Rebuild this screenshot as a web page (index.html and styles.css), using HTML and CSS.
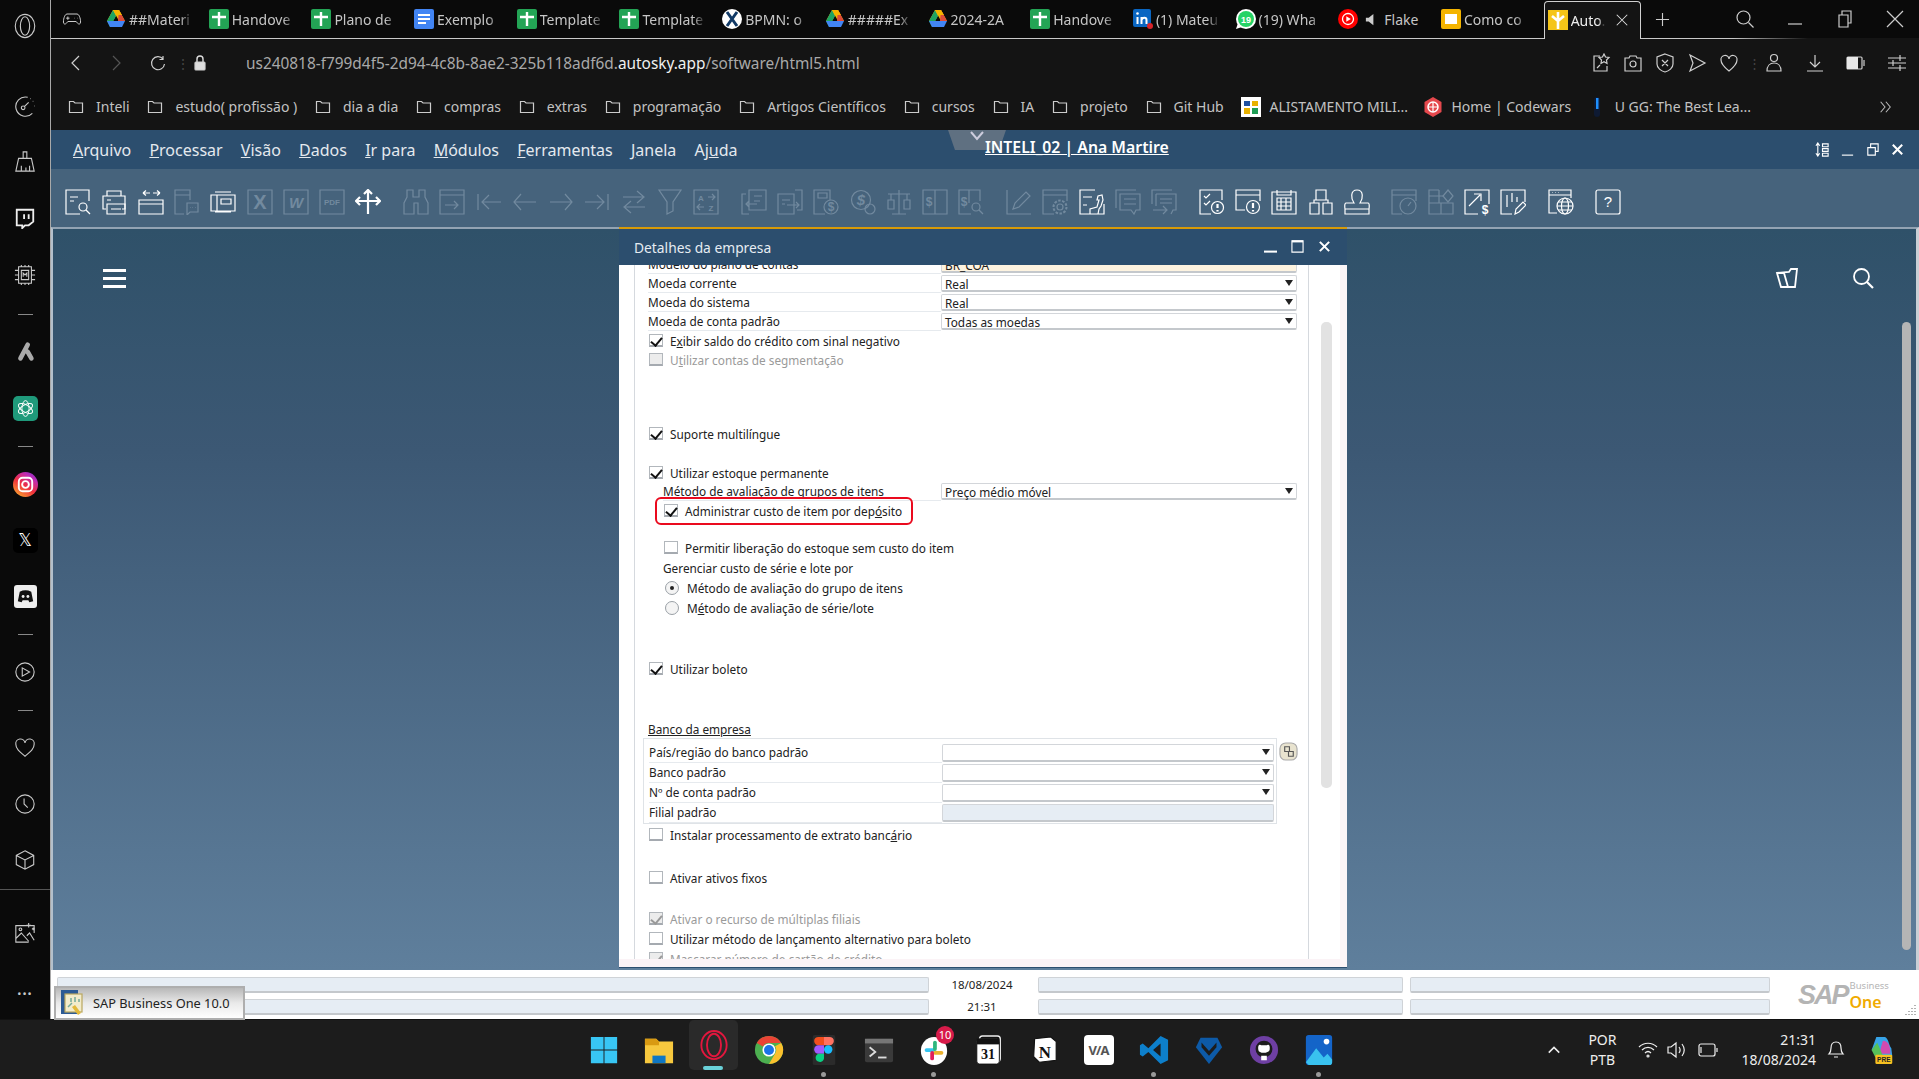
FILE: index.html
```html
<!DOCTYPE html>
<html lang="pt-BR">
<head>
  <meta charset="UTF-8">
  <title>SAP Business One - Detalhes da empresa</title>
  <link rel="stylesheet" href="styles.css">
</head>
<body>
  <!-- shared icons -->
  <svg class="defs" xmlns="http://www.w3.org/2000/svg">
    <symbol id="folder" viewBox="0 0 16 16"><path d="M1.5 13.5v-11h4l1.5 1.5h7.5v9.500z"/></symbol>
    <symbol id="sheets" viewBox="0 0 20 20"><rect x="0" y="0" width="20" height="20" rx="2" fill="#23a455" stroke="none"/><path d="M10 3v14M3 8h14" stroke="#fff" stroke-width="2.4"/></symbol>
    <symbol id="drive" viewBox="0 0 20 20"><path d="M7 1h6l-6 11H1z" fill="#f5b400" stroke="none"/><path d="M13 1l6 11h-6L7 1z" fill="#f5b400" stroke="none"/><path d="M7 1l3 6-6 11-3-6z" fill="#1da462" stroke="none"/><path d="M13 1l6 11h-7z" fill="#dd4b39" stroke="none"/><path d="M1 12h0l3 6h12l3-6H7z" fill="#4285f4" stroke="none"/><path d="M7 1h6l3 5H10z" fill="#f5b400" stroke="none"/></symbol>
    <symbol id="docs" viewBox="0 0 20 20"><rect width="20" height="20" rx="2" fill="#4285f4" stroke="none"/><path d="M4 6h12M4 10h12M4 14h8" stroke="#fff" stroke-width="2"/></symbol>
    <symbol id="bpmn" viewBox="0 0 20 20"><circle cx="10" cy="10" r="10" fill="#fff" stroke="none"/><path d="M5 3l10 14M15 3L5 17" stroke="#123a66" stroke-width="3"/></symbol>
    <symbol id="linkedin" viewBox="0 0 20 20"><rect width="18" height="18" rx="2" fill="#0a66c2" stroke="none"/><path d="M4.500 8v7M8.500 15V8M8.500 11c1-3 5-3 5 0v4" stroke="#fff" stroke-width="2"/><circle cx="4.500" cy="4.500" r="1.300" fill="#fff" stroke="none"/><circle cx="17" cy="17" r="3" fill="#d8232a" stroke="none"/></symbol>
    <symbol id="whatsapp" viewBox="0 0 20 20"><circle cx="10" cy="10" r="10" fill="#fff" stroke="none"/><circle cx="10" cy="10" r="8" fill="#25d366" stroke="none"/><path d="M0 20l2-6 4 4z" fill="#fff" stroke="none"/></symbol>
    <symbol id="youtube" viewBox="0 0 20 20"><circle cx="10" cy="10" r="10" fill="#f00" stroke="none"/><circle cx="10" cy="10" r="5.500" stroke="#fff" stroke-width="1.300"/><path d="M8.300 7.300l4.500 2.700-4.500 2.700z" fill="#fff" stroke="none"/></symbol>
    <symbol id="slides" viewBox="0 0 20 20"><rect width="20" height="20" rx="2" fill="#f4b400" stroke="none"/><rect x="4" y="5" width="12" height="10" fill="#fff" stroke="none"/></symbol>
    <symbol id="autosky" viewBox="0 0 20 20"><rect width="20" height="20" fill="#f5c518" stroke="none"/><path d="M10 19v-8M10 11L4 6M10 11l6-5M10 9V2" stroke="#fff" stroke-width="2.600"/></symbol>

    <!-- toolbar -->
    <symbol id="t-preview" viewBox="0 0 26 26"><path d="M24 12V1H1v24h14M5 8h8M5 12h4"/><circle cx="18" cy="18" r="4"/><path d="M21 21l4 4"/></symbol>
    <symbol id="t-print" viewBox="0 0 26 26"><path d="M6 7V2h14v5M5 20H2V7h22v13h-3M6 11h4"/><path d="M6 15h18v10H6zM10 20h10"/></symbol>
    <symbol id="t-width" viewBox="0 0 26 26"><path d="M1 11h24v14H1zM1 15h24M5 4h7M5 4l3-2.500M5 4l3 2.500M15 4h7M22 4l-3-2.500M22 4l-3 2.500"/></symbol>
    <symbol id="t-docchat" viewBox="0 0 26 26"><path d="M16 11V1H1v24h9M1 6h15"/><path d="M13 14h11v9h-8l-3 3z"/><path d="M16 18.500h.5M18.500 18.500h.5M21 18.500h.5"/></symbol>
    <symbol id="t-layout" viewBox="0 0 26 26"><path d="M5 3h16M5 23h16M1 6h24v16H1zM7 6v16M11 10h10v5H11z"/></symbol>
    <symbol id="t-box" viewBox="0 0 26 26"><path d="M1 1h24v24H1z"/></symbol>
    <symbol id="t-move" viewBox="0 0 26 26"><path class="thick" d="M13 1v24M1 12h24M9 5l4-4 4 4M5 8l-4 4 4 4M21 8l4 4-4 4"/></symbol>
    <symbol id="t-binoc" viewBox="0 0 26 26"><path d="M4 1h6v7h6V1h6v7l3 6v11H15V14h-4v11H1V14l3-6z"/></symbol>
    <symbol id="t-docarrow" viewBox="0 0 26 26"><path d="M1 1h24v24H1zM1 6h24M6 16h13M15 12l4 4-4 4"/></symbol>
    <symbol id="t-first" viewBox="0 0 26 26"><path d="M2 5v16M25 13H6M13 6l-7 7 7 7"/></symbol>
    <symbol id="t-prev" viewBox="0 0 26 26"><path d="M24 13H2M9 5l-7 8 7 8"/></symbol>
    <symbol id="t-next" viewBox="0 0 26 26"><path d="M2 13h22M17 5l7 8-7 8"/></symbol>
    <symbol id="t-last" viewBox="0 0 26 26"><path d="M24 5v16M1 13h19M13 6l7 7-7 7"/></symbol>
    <symbol id="t-swap" viewBox="0 0 26 26"><path d="M2 8h20M16 2l7 6-7 6M24 18H4M10 12l-7 6 7 6"/></symbol>
    <symbol id="t-filter" viewBox="0 0 26 26"><path d="M2 1h22l-8 12v9l-6 3V13z"/></symbol>
    <symbol id="t-sort" viewBox="0 0 26 26"><path d="M1 1h24v24H1zM15 8h7M19 5l3 3-3 3M11 18H4M7 15l-3 3 3 3"/></symbol>
    <symbol id="t-docleft" viewBox="0 0 26 26"><path d="M8 1h17v20H8zM8 25H1V5h4M13 7h8M13 12h6M16 15H5M8 12l-3 3 3 3"/></symbol>
    <symbol id="t-docright" viewBox="0 0 26 26"><path d="M1 5h16v20H1zM18 1h7v20h-5M5 11h8M5 15h3M10 16h12M19 13l3 3-3 3"/></symbol>
    <symbol id="t-docmoney" viewBox="0 0 26 26"><path d="M17 11V1H1v24h11M5 4h9v5H5z"/><circle cx="18" cy="18" r="7"/></symbol>
    <symbol id="t-coin" viewBox="0 0 26 26"><circle cx="11" cy="11" r="9.500"/><circle cx="20" cy="20" r="5"/></symbol>
    <symbol id="t-scale" viewBox="0 0 26 26"><path d="M13 1v24M6 25h14M2 5h22M5 5v6M21 5v6M2 11h6v9H2zM18 11h6v9h-6z"/></symbol>
    <symbol id="t-ledger" viewBox="0 0 26 26"><path d="M1 1h24v24H1zM13 1v24"/></symbol>
    <symbol id="t-ledgerq" viewBox="0 0 26 26"><path d="M22 12V1H1v24h12M11 1v13"/><circle cx="18" cy="18" r="4"/><path d="M21 21l4 4"/></symbol>
    <symbol id="t-pen" viewBox="0 0 26 26"><path d="M1 1v24h24M7 20l2-6L20 3l4 4-11 11z"/></symbol>
    <symbol id="t-wingear" viewBox="0 0 26 26"><path d="M12 25H1V1h24v11M1 6h24"/><circle cx="18" cy="18" r="3"/><circle cx="18" cy="18" r="6.500" stroke-dasharray="2.500 1.500" stroke-width="2"/></symbol>
    <symbol id="t-tools" viewBox="0 0 26 26"><path d="M16 1H1v24h24V15M4 8h9M4 16h4M11 25v-5l7-2 2-7h-2l1-4 4-1 1 5-2 6-2 3-1 5z"/></symbol>
    <symbol id="t-msg" viewBox="0 0 26 26"><path d="M1 19V1h20M5 5h20v16h-4l-2 4-3-4H5zM9 10h12M9 15h12"/></symbol>
    <symbol id="t-msgarrow" viewBox="0 0 26 26"><path d="M1 15V1h20M5 5h20v16h-3l-2 4M5 17V5M9 10h12M9 14h12M2 21h14M12 17l4 4-4 4"/></symbol>
    <symbol id="t-checkalert" viewBox="0 0 26 26"><path d="M12 25H1V1h22v10M5 7l2 2 4-4M5 14l2 2 4-4"/><circle cx="18.500" cy="18.500" r="6"/><path class="thick" d="M18.500 15v4M18.500 21v1.500"/></symbol>
    <symbol id="t-winalert" viewBox="0 0 26 26"><path d="M10 21H1V1h24v11M1 6h24"/><circle cx="18" cy="18" r="6.500"/><path class="thick" d="M18 14v5M18 21v1.500"/></symbol>
    <symbol id="t-calc" viewBox="0 0 26 26"><path d="M1 3h24v22H1zM6 1v5h14V1M6 9h14v12H6zM10 9v12M15 9v12M6 13h14M6 17h14"/></symbol>
    <symbol id="t-tree" viewBox="0 0 26 26"><path d="M8 1h10v10H8zM2 14h9v11H2zM15 14h9v11h-9zM6 14v-3h14v3"/></symbol>
    <symbol id="t-stamp" viewBox="0 0 26 26"><path d="M13 1c-7 0-6 9-3 13H2c-2 0-1 6-1 6v5h24v-5s1-6-1-6h-8c3-4 4-13-3-13zM1 20h24"/></symbol>
    <symbol id="t-gauge" viewBox="0 0 26 26"><path d="M11 25H1V1h24v11M1 6h24"/><circle cx="17" cy="17" r="8"/><path d="M17 17l3-4"/></symbol>
    <symbol id="t-shapes" viewBox="0 0 26 26"><path d="M15 7H1v18h24V14H11V1M1 14h24M13 14v11M11 1H1v13"/><path d="M20 1l5 6-5 6-5-6z"/></symbol>
    <symbol id="t-chartmoney" viewBox="0 0 26 26"><path d="M14 25H1V1h24v14M5 17l11-11M10 5h7v7"/></symbol>
    <symbol id="t-chartpen" viewBox="0 0 26 26"><path d="M12 25H1V1h24v12M7 6v12M12 4v9M17 8v5M15 25l1-5 7-7 3 3-7 7z"/></symbol>
    <symbol id="t-globe" viewBox="0 0 26 26"><path d="M9 24H1V1h22v8M1 6h22M4 3.500h.5M7 3.500h.5M10 3.500h.5"/><circle cx="17" cy="17" r="8"/><ellipse cx="17" cy="17" rx="3.500" ry="8"/><path d="M9 17h16M10 13h14M10 21h14"/></symbol>
    <symbol id="t-help" viewBox="0 0 26 26"><rect x="1" y="1" width="24" height="24" rx="2"/></symbol>
  </svg>

  <div class="screen">
    <aside class="sidebar">
      <div class="side-logo">
        <svg class="side-ico" viewBox="0 0 24 28"><ellipse cx="12" cy="14" rx="10.500" ry="12.500"/><ellipse cx="12" cy="14" rx="5" ry="10"/></svg>
      </div>
      <div class="side-item"><svg class="side-ico" viewBox="0 0 24 24"><path d="M20 20A10.500 10.500 0 1 1 15 2.500M22.500 12h-.5M21 7h-.5M18 4h-.5"/><circle cx="10" cy="14" r="2"/><path d="M11.500 12.500L16 8"/></svg></div>
      <div class="side-item"><svg class="side-ico" viewBox="0 0 24 24"><path d="M10 8V1h4v7M5 8h14l3 14H2zM8 16v6M13 18v4M17 16v6"/></svg></div>
      <div class="side-item"><svg class="side-ico" viewBox="0 0 24 24"><path class="bright" d="M3 3h18v13l-5 4h-4l-3 3v-3H3zM11 8v5M16 8v5"/></svg></div>
      <div class="side-item side-item-tall"><svg class="side-ico" viewBox="0 0 24 24"><path d="M5 3h14v18H5zM8 7h8v10H8zM8 1v2M12 1v2M16 1v2M8 21v2M12 21v2M16 21v2M1 7h4M1 12h4M1 17h4M19 7h4M19 12h4M19 17h4"/><path d="M10 14v-4l2 2 2-2v4"/></svg></div>
      <div class="side-sep"></div>
      <div class="side-item"><svg class="side-ico side-arrow" viewBox="0 0 24 24"><path d="M15 4L7 19M15 12l4 7"/></svg></div>
      <div class="side-item">
        <div class="gpt-badge"><svg viewBox="0 0 24 24" class="gpt-ico"><ellipse cx="12" cy="12" rx="4.500" ry="10"/><ellipse cx="12" cy="12" rx="4.500" ry="10" transform="rotate(60 12 12)"/><ellipse cx="12" cy="12" rx="4.500" ry="10" transform="rotate(120 12 12)"/></svg></div>
      </div>
      <div class="side-sep"></div>
      <div class="side-item"><div class="insta"><svg viewBox="0 0 24 24" class="insta-ico"><rect x="5" y="5" width="14" height="14" rx="4"/><circle cx="12" cy="12" r="3.500"/></svg></div></div>
      <div class="side-item"><div class="x-badge">𝕏</div></div>
      <div class="side-item"><div class="discord"><svg viewBox="0 0 24 24" class="discord-ico"><path d="M6 7c4-2 8-2 12 0l2 10-4 1-1-2H9l-1 2-4-1z"/><circle cx="9.500" cy="12" r="1.500" fill="#eee"/><circle cx="14.500" cy="12" r="1.500" fill="#eee"/></svg></div></div>
      <div class="side-sep"></div>
      <div class="side-item"><svg class="side-ico" viewBox="0 0 24 24"><circle cx="12" cy="12" r="10"/><path d="M9 7.500l8 4.500-8 4.500z"/></svg></div>
      <div class="side-sep"></div>
      <div class="side-item"><svg class="side-ico" viewBox="0 0 24 24"><path d="M12 21C6 16 2 13 2 8a5 5 0 0 1 10-1.500A5 5 0 0 1 22 8c0 5-4 8-10 13z"/></svg></div>
      <div class="side-item"><svg class="side-ico" viewBox="0 0 24 24"><circle cx="12" cy="12" r="10"/><path d="M11 6v6l4 4"/></svg></div>
      <div class="side-item"><svg class="side-ico" viewBox="0 0 24 24"><path d="M12 2l9.500 5v10L12 22l-9.500-5V7zM2.500 7l9.500 5 9.500-5M12 12v10"/></svg></div>
      <div class="side-sep side-sep-wide"></div>
      <div class="side-item"><svg class="side-ico" viewBox="0 0 24 24"><path d="M22 12V4H2v18h14M2 18l6-6 8 9M14 15l3-3 5 8"/><circle cx="7" cy="8" r="1.500"/><path d="M16 1v5M13.500 3.500h5M21 6v3M19.500 7.500h3"/></svg></div>
      <div class="side-more">•••</div>
    </aside>

    <div class="main">
      <div class="tabbar">
        <svg class="tab-game" viewBox="0 0 24 24"><path d="M6 6h12c3 0 5 8 4 11-1 2-3 1-5-2H7c-2 3-4 4-5 2C1 14 3 6 6 6zM7 9v4M5 11h4M15 11h.5M18 11h.5"/></svg>
        <div class="tab"><svg class="tab-ico"><use href="#drive"/></svg><span class="tab-title">##Materi</span></div>
        <div class="tab"><svg class="tab-ico"><use href="#sheets"/></svg><span class="tab-title">Handove</span></div>
        <div class="tab"><svg class="tab-ico"><use href="#sheets"/></svg><span class="tab-title">Plano de</span></div>
        <div class="tab"><svg class="tab-ico"><use href="#docs"/></svg><span class="tab-title">Exemplo</span></div>
        <div class="tab"><svg class="tab-ico"><use href="#sheets"/></svg><span class="tab-title">Template</span></div>
        <div class="tab"><svg class="tab-ico"><use href="#sheets"/></svg><span class="tab-title">Template</span></div>
        <div class="tab"><svg class="tab-ico"><use href="#bpmn"/></svg><span class="tab-title">BPMN: o</span></div>
        <div class="tab"><svg class="tab-ico"><use href="#drive"/></svg><span class="tab-title">#####Ex</span></div>
        <div class="tab"><svg class="tab-ico"><use href="#drive"/></svg><span class="tab-title">2024-2A</span></div>
        <div class="tab"><svg class="tab-ico"><use href="#sheets"/></svg><span class="tab-title">Handove</span></div>
        <div class="tab"><svg class="tab-ico"><use href="#linkedin"/></svg><span class="tab-title">(1) Mateu</span></div>
        <div class="tab"><svg class="tab-ico" viewBox="0 0 20 20"><use href="#whatsapp"/><text x="10" y="13.500" class="gl badge-num">19</text></svg><span class="tab-title">(19) Wha</span></div>
        <div class="tab"><svg class="tab-ico"><use href="#youtube"/></svg><svg class="tab-sound" viewBox="0 0 16 16"><path d="M2 6h3l5-4v12l-5-4H2z" fill="#ccc" stroke="none"/></svg><span class="tab-title tab-title-short">Flake</span></div>
        <div class="tab"><svg class="tab-ico"><use href="#slides"/></svg><span class="tab-title">Como co</span></div>
        <div class="tab tab-active"><svg class="tab-ico"><use href="#autosky"/></svg><span class="tab-title tab-title-active">Auto.</span><svg class="tab-close" viewBox="0 0 16 16"><path d="M2 2l12 12M14 2L2 14"/></svg></div>
        <svg class="tab-new" viewBox="0 0 16 16"><path d="M8 1v14M1 8h14"/></svg>
        <div class="win-btns">
          <svg class="win-search" viewBox="0 0 20 20"><circle cx="8.500" cy="8.500" r="6.500"/><path d="M13.500 13.500l5 5"/></svg>
          <svg class="win-btn" viewBox="0 0 20 20"><path d="M3 15h14"/></svg>
          <svg class="win-btn" viewBox="0 0 20 20"><path d="M4 6h9v12H4zM7 6V2h9v12h-3"/></svg>
          <svg class="win-btn" viewBox="0 0 20 20"><path d="M2 2l16 16M18 2L2 18"/></svg>
        </div>
      </div>

      <div class="addressbar">
        <svg class="nav-ico" viewBox="0 0 16 16"><path d="M11 1L4 8l7 7"/></svg>
        <svg class="nav-ico nav-fwd" viewBox="0 0 16 16"><path d="M5 1l7 7-7 7"/></svg>
        <svg class="nav-ico nav-reload" viewBox="0 0 16 16"><path d="M13 4a6.500 6.500 0 1 0 1.500 5M13 1v3.500H9.500"/></svg>
        <span class="nav-dots">⋮</span>
        <svg class="nav-lock" viewBox="0 0 16 16"><path d="M5 7V4a3 3 0 0 1 6 0v3" fill="none" stroke="#ddd" stroke-width="1.400"/><rect x="3" y="7" width="10" height="8" rx="1" fill="#ddd"/></svg>
        <div class="url">us240818-f799d4f5-2d94-4c8b-8ae2-325b118adf6d.<b>autosky.app</b>/software/html5.html</div>
        <div class="addr-actions">
          <svg class="addr-ico" viewBox="0 0 20 20"><path d="M9 3H3v15h13v-5M13 1l1.500 3 3.500.5-2.500 2.500.5 3.500-3-1.700-3 1.700.5-3.500L8 4.500l3.500-.5zM6 15l3-3"/></svg>
          <svg class="addr-ico" viewBox="0 0 20 20"><path d="M2 5h4l1-2h6l1 2h4v13H2z"/><circle cx="10" cy="11" r="3"/></svg>
          <svg class="addr-ico" viewBox="0 0 20 20"><path d="M10 1l8 3v7c0 4-4 7-8 8-4-1-8-4-8-8V4zM7 7l6 6M13 7l-6 6"/></svg>
          <svg class="addr-ico" viewBox="0 0 20 20"><path d="M3 2l15 8-15 8 3-8z"/></svg>
          <svg class="addr-ico" viewBox="0 0 20 20"><path d="M10 18C5 14 2 11 2 7a4 4 0 0 1 8-1 4 4 0 0 1 8 1c0 4-3 7-8 11z"/></svg>
          <span class="addr-dots">⋮</span>
          <svg class="addr-ico addr-gap" viewBox="0 0 20 20"><circle cx="10" cy="5" r="3.500"/><path d="M3 18c0-5 3-8 7-8s7 3 7 8z" /></svg>
          <svg class="addr-ico addr-gap" viewBox="0 0 20 20"><path d="M10 2v11M5 9l5 5 5-5M2 18h16"/></svg>
          <svg class="addr-ico addr-gap" viewBox="0 0 20 20"><rect x="1" y="4" width="15" height="12" rx="1"/><rect x="1" y="4" width="11" height="12" fill="#e8e8e8" stroke="none"/><path d="M18 7v6"/></svg>
          <svg class="addr-ico addr-gap" viewBox="0 0 20 20"><path d="M1 5h18M1 10h18M1 15h18M13 2v6M6 7v6M13 12v6"/></svg>
        </div>
      </div>

      <div class="bookmarks">
        <div class="bm"><svg class="bm-ico"><use href="#folder"/></svg>Inteli</div>
        <div class="bm"><svg class="bm-ico"><use href="#folder"/></svg>estudo( profissão )</div>
        <div class="bm"><svg class="bm-ico"><use href="#folder"/></svg>dia a dia</div>
        <div class="bm"><svg class="bm-ico"><use href="#folder"/></svg>compras</div>
        <div class="bm"><svg class="bm-ico"><use href="#folder"/></svg>extras</div>
        <div class="bm"><svg class="bm-ico"><use href="#folder"/></svg>programação</div>
        <div class="bm"><svg class="bm-ico"><use href="#folder"/></svg>Artigos Científicos</div>
        <div class="bm"><svg class="bm-ico"><use href="#folder"/></svg>cursos</div>
        <div class="bm"><svg class="bm-ico"><use href="#folder"/></svg>IA</div>
        <div class="bm"><svg class="bm-ico"><use href="#folder"/></svg>projeto</div>
        <div class="bm"><svg class="bm-ico"><use href="#folder"/></svg>Git Hub</div>
        <div class="bm bm-tight"><svg class="bm-fav" viewBox="0 0 20 20"><rect width="20" height="20" fill="#fff"/><path d="M3 4h6v5H3z" fill="#1d4fa0"/><path d="M11 4h6v5h-6z" fill="#e8b100"/><path d="M3 11h6v6H3z" fill="#e8b100"/><path d="M11 11h6v6h-6z" fill="#1f9d55"/></svg>ALISTAMENTO MILI...</div>
        <div class="bm bm-tight"><svg class="bm-fav" viewBox="0 0 20 20"><path d="M10 0l8.500 5v10L10 20l-8.500-5V5z" fill="#e5484d"/><circle cx="10" cy="10" r="5" fill="none" stroke="#fff" stroke-width="1.500"/><path d="M5 10h10M10 5v10" stroke="#fff"/></svg>Home | Codewars</div>
        <div class="bm"><svg class="bm-fav" viewBox="0 0 20 20"><rect x="7" y="0" width="6" height="20" rx="3" fill="#0e1a33"/><rect x="9" y="1" width="2.500" height="11" fill="#1e90ff"/></svg>U GG: The Best Lea...</div>
        <svg class="bm-more" viewBox="0 0 16 16"><path d="M3 2l5 6-5 6M9 2l5 6-5 6"/></svg>
      </div>

      <nav class="menubar">
        <span class="menu-item"><u>A</u>rquivo</span>
        <span class="menu-item"><u>P</u>rocessar</span>
        <span class="menu-item"><u>V</u>isão</span>
        <span class="menu-item"><u>D</u>ados</span>
        <span class="menu-item"><u>I</u>r para</span>
        <span class="menu-item"><u>M</u>ódulos</span>
        <span class="menu-item"><u>F</u>erramentas</span>
        <span class="menu-item"><u>J</u>anela</span>
        <span class="menu-item">Aj<u>u</u>da</span>
        <div class="menu-notch"><svg class="notch-ico" viewBox="0 0 16 10"><path d="M2 1l6 7 6-7"/></svg></div>
        <div class="menu-company">INTELI_02 | Ana Martire</div>
        <div class="menu-win">
          <svg class="menu-win-ico" viewBox="0 0 16 16"><path d="M3 1v14M1 4l2-3 2 3M1 12l2 3 2-3M8 2h6v3H8zM8 7h6v3H8zM8 12h6v3H8z"/></svg>
          <svg class="menu-win-ico" viewBox="0 0 16 16"><path d="M2 14h12"/></svg>
          <svg class="menu-win-ico" viewBox="0 0 16 16"><path d="M3 6h8v8H3zM6 6V2h8v8h-3"/></svg>
          <svg class="menu-win-ico" viewBox="0 0 16 16"><path class="thick" d="M3 3l10 10M13 3L3 13"/></svg>
        </div>
      </nav>

      <div class="toolbar">
        <div class="tool-group">
          <svg class="tool"><use href="#t-preview"/></svg>
          <svg class="tool"><use href="#t-print"/></svg>
          <svg class="tool"><use href="#t-width"/></svg>
          <svg class="tool off"><use href="#t-docchat"/></svg>
          <svg class="tool"><use href="#t-layout"/></svg>
          <svg class="tool off" viewBox="0 0 26 26"><use href="#t-box"/><text x="13" y="20" class="gl big-glyph">X</text></svg>
          <svg class="tool off" viewBox="0 0 26 26"><use href="#t-box"/><text x="13" y="19" class="gl mid-glyph">W</text></svg>
          <svg class="tool off" viewBox="0 0 26 26"><use href="#t-box"/><text x="13" y="16" class="gl tiny-glyph">PDF</text></svg>
          <svg class="tool"><use href="#t-move"/></svg>
        </div>
        <div class="tool-group">
          <svg class="tool off"><use href="#t-binoc"/></svg>
          <svg class="tool off"><use href="#t-docarrow"/></svg>
          <svg class="tool off"><use href="#t-first"/></svg>
          <svg class="tool off"><use href="#t-prev"/></svg>
          <svg class="tool off"><use href="#t-next"/></svg>
          <svg class="tool off"><use href="#t-last"/></svg>
          <svg class="tool off"><use href="#t-swap"/></svg>
          <svg class="tool off"><use href="#t-filter"/></svg>
          <svg class="tool off" viewBox="0 0 26 26"><use href="#t-sort"/><text x="8" y="12" class="gl tiny-glyph">A</text><text x="18" y="22" class="gl tiny-glyph">Z</text></svg>
        </div>
        <div class="tool-group">
          <svg class="tool off"><use href="#t-docleft"/></svg>
          <svg class="tool off"><use href="#t-docright"/></svg>
          <svg class="tool off" viewBox="0 0 26 26"><use href="#t-docmoney"/><text x="18" y="22" class="gl small-glyph">$</text></svg>
          <svg class="tool off" viewBox="0 0 26 26"><use href="#t-coin"/><text x="11" y="15.500" class="gl mid-glyph">$</text></svg>
          <svg class="tool off"><use href="#t-scale"/></svg>
          <svg class="tool off" viewBox="0 0 26 26"><use href="#t-ledger"/><text x="7" y="17" class="gl small-glyph">$</text></svg>
          <svg class="tool off" viewBox="0 0 26 26"><use href="#t-ledgerq"/><text x="6" y="17" class="gl small-glyph">$</text></svg>
        </div>
        <div class="tool-group">
          <svg class="tool off"><use href="#t-pen"/></svg>
          <svg class="tool off"><use href="#t-wingear"/></svg>
          <svg class="tool"><use href="#t-tools"/></svg>
          <svg class="tool off"><use href="#t-msg"/></svg>
          <svg class="tool off"><use href="#t-msgarrow"/></svg>
        </div>
        <div class="tool-group">
          <svg class="tool"><use href="#t-checkalert"/></svg>
          <svg class="tool"><use href="#t-winalert"/></svg>
          <svg class="tool"><use href="#t-calc"/></svg>
          <svg class="tool"><use href="#t-tree"/></svg>
          <svg class="tool"><use href="#t-stamp"/></svg>
        </div>
        <div class="tool-group">
          <svg class="tool off"><use href="#t-gauge"/></svg>
          <svg class="tool off"><use href="#t-shapes"/></svg>
          <svg class="tool" viewBox="0 0 26 26"><use href="#t-chartmoney"/><text x="21" y="25" class="gl small-glyph">$</text></svg>
          <svg class="tool"><use href="#t-chartpen"/></svg>
        </div>
        <div class="tool-group"><svg class="tool"><use href="#t-globe"/></svg></div>
        <div class="tool-group"><svg class="tool" viewBox="0 0 26 26"><use href="#t-help"/><text x="13" y="18" class="gl mid-glyph thin-glyph">?</text></svg></div>
      </div>

      <div class="desktop">
        <header class="desk-head">
          <div class="burger"><span></span><span></span><span></span></div>
          <svg class="desk-ico desk-open" viewBox="0 0 24 24"><path d="M2 7l12-1 2-3h6l-2 18H6zM2 7h7l4 14"/></svg>
          <svg class="desk-ico" viewBox="0 0 24 24"><circle cx="10.500" cy="10.500" r="7.500"/><path class="thick" d="M16 16l6 6"/></svg>
        </header>
        <div class="desk-scroll"></div>

        <section class="dialog">
          <div class="dlg-title">
            <span>Detalhes da empresa</span>
            <div class="dlg-btns">
              <svg class="dlg-btn" viewBox="0 0 14 14"><path class="thick" d="M0 12.500h14"/></svg>
              <svg class="dlg-btn" viewBox="0 0 14 14"><path d="M1 1h12v12H1z"/><path class="thick" d="M1 1.500h12"/></svg>
              <svg class="dlg-btn" viewBox="0 0 14 14"><path class="thick" d="M2 2l10 10M12 2L2 12"/></svg>
            </div>
          </div>
          <div class="dlg-body">
            <div class="form">
              <div class="row row-first"><span class="lbl">Modelo do plano de contas</span><span class="field field-key">BR_COA</span></div>
              <div class="row"><span class="lbl">Moeda corrente</span><span class="field combo">Real</span></div>
              <div class="row"><span class="lbl">Moeda do sistema</span><span class="field combo">Real</span></div>
              <div class="row"><span class="lbl">Moeda de conta padrão</span><span class="field combo">Todas as moedas</span></div>
              <label class="row check-row"><span class="box checked"></span><span class="tx">E<u>x</u>ibir saldo do crédito com sinal negativo</span></label>
              <label class="row check-row dim"><span class="box"></span><span class="tx">U<u>t</u>ilizar contas de segmentação</span></label>
              <label class="row check-row mt-55"><span class="box checked"></span><span class="tx">Suporte multilíngue</span></label>
              <label class="row check-row mt-20"><span class="box checked"></span><span class="tx">Utilizar estoque permanente</span></label>
              <div class="row row-sub"><span class="lbl lbl-sub">Método de avaliação de grupos de itens</span><span class="field combo">Preço médio móvel</span></div>
              <label class="row check-row check-sub"><span class="box checked"></span><span class="tx">Administrar custo de item por dep<u>ó</u>sito</span><span class="mark"></span></label>
              <label class="row check-row check-sub mt-18"><span class="box"></span><span class="tx">Permitir liberação do estoque sem custo do item</span></label>
              <div class="row row-sub mt-1"><span class="tx">Gerenciar custo de série e lote por</span></div>
              <label class="row check-row check-sub mt-1"><span class="radio radio-on"></span><span class="tx">Método de avaliação do grupo de itens</span></label>
              <label class="row check-row check-sub mt-1"><span class="radio"></span><span class="tx">M<u>é</u>todo de avaliação de série/lote</span></label>
              <label class="row check-row mt-42"><span class="box checked"></span><span class="tx">Utilizar boleto</span></label>
              <div class="row mt-41"><span class="tx section"><u>Banco da empresa</u></span></div>
              <div class="bank-frame">
                <div class="row row-bank"><span class="lbl">País/região do banco padrão</span><span class="field combo"></span><svg class="link-btn" viewBox="0 0 20 20"><rect x="1" y="1" width="18" height="18" rx="6" fill="#e8e3cf" stroke="#aaa"/><path d="M6 5h5v5H6zM10 10h5v5h-5z" fill="none" stroke="#555"/></svg></div>
                <div class="row row-bank"><span class="lbl">Banco padrão</span><span class="field combo"></span></div>
                <div class="row row-bank"><span class="lbl">Nº de conta padrão</span><span class="field combo"></span></div>
                <div class="row row-bank"><span class="lbl">Filial padrão</span><span class="field field-ro"></span></div>
              </div>
              <label class="row check-row mt-1"><span class="box"></span><span class="tx">Instalar processamento de extrato banc<u>á</u>rio</span></label>
              <label class="row check-row mt-24"><span class="box"></span><span class="tx">Ativar ativos fixos</span></label>
              <label class="row check-row mt-22 dim"><span class="box checked"></span><span class="tx">Ativar o recurso de múltiplas filiais</span></label>
              <label class="row check-row mt-1"><span class="box"></span><span class="tx">Utilizar método de lançamento alternativo para boleto</span></label>
              <label class="row check-row mt-1 dim"><span class="box checked"></span><span class="tx">Mascarar número de cartão de crédito</span></label>
            </div>
            <div class="dlg-scroll"></div>
          </div>
        </section>
      </div>

      <footer class="statusbar">
        <div class="st-field"></div><div class="st-text">18/08/2024</div><div class="st-field"></div><div class="st-field"></div>
        <div class="st-field"></div><div class="st-text">21:31</div><div class="st-field"></div><div class="st-field"></div>
        <div class="sap-logo"><span class="sap-mark">SAP</span><span class="sap-name"><span class="sap-biz">Business</span><span class="sap-one">One</span></span></div>
        <svg class="grip" viewBox="0 0 14 14"><path d="M12 2v1M12 5v1M9 5v1M12 8v1M9 8v1M6 8v1M12 11v1M9 11v1M6 11v1M3 11v1" stroke="#999" stroke-width="1.500"/></svg>
        <div class="st-tip"><svg class="tip-ico" viewBox="0 0 24 28"><rect x="1" y="1" width="17" height="24" fill="#2c5a94"/><rect x="5" y="5" width="17" height="18" fill="#f3eccb" stroke="#b9a760"/><path d="M8 18l4-4M11 9v4M15 8v5M19 10v3" stroke="#7a9" stroke-width="1.500"/><path d="M12 18l6 8 3-2-6-8z" fill="#e2b93b"/></svg>SAP Business One 10.0</div>
      </footer>
    </div>
  </div>

  <div class="taskbar">
    <div class="task-apps">
      <div class="app"><svg class="app-ico" viewBox="0 0 32 32"><path d="M2 2h13.500v13.500H2zM16.500 2H30v13.500H16.500zM2 16.500h13.500V30H2zM16.500 16.500H30V30H16.500z" fill="#38c6f4"/></svg></div>
      <div class="app"><svg class="app-ico" viewBox="0 0 32 32"><path d="M1 4h12l3 3h15v23H1z" fill="#f7c83e"/><path d="M1 4h12l3 3v4H1z" fill="#d99a12"/><rect x="9" y="22" width="14" height="8" fill="#0f77c4"/></svg></div>
      <div class="app app-active"><svg class="app-ico" viewBox="0 0 32 32"><ellipse cx="16" cy="16" rx="13.500" ry="15" fill="none" stroke="#e3173e" stroke-width="2"/><ellipse cx="16" cy="16" rx="7.500" ry="12" fill="none" stroke="#e3173e" stroke-width="2"/></svg><i class="pill"></i></div>
      <div class="app"><svg class="app-ico" viewBox="0 0 32 32"><circle cx="16" cy="16" r="15" fill="#4caf50"/><path d="M16 1a15 15 0 0 1 13 7.500H16a7.500 7.500 0 0 0-6.500 3.700L3 8.500A15 15 0 0 1 16 1z" fill="#ea4335"/><path d="M29 8.500A15 15 0 0 1 16 31l6.500-11.200A7.500 7.500 0 0 0 22.500 12z" fill="#fbc02d"/><circle cx="16" cy="16" r="7" fill="#fff"/><circle cx="16" cy="16" r="5.300" fill="#1a73e8"/></svg></div>
      <div class="app"><svg class="app-ico" viewBox="0 0 32 32"><rect x="4" y="0" width="24" height="32" rx="2" fill="#2b2b2b"/><path d="M10 2h6v9h-6a4.500 4.500 0 0 1 0-9z" fill="#f24e1e"/><path d="M16 2h6a4.500 4.500 0 0 1 0 9h-6z" fill="#ff7262"/><path d="M10 11h6v9h-6a4.500 4.500 0 0 1 0-9z" fill="#a259ff"/><circle cx="20.500" cy="15.500" r="4.500" fill="#1abcfe"/><path d="M10 20h6v5a4.500 4.500 0 1 1-6-5z" fill="#0acf83"/></svg><i class="dot"></i></div>
      <div class="app"><svg class="app-ico" viewBox="0 0 32 32"><rect x="1" y="4" width="30" height="25" rx="2" fill="#3a3a3a"/><rect x="1" y="4" width="30" height="5" fill="#777"/><path d="M6 13l6 5-6 5" fill="none" stroke="#ddd" stroke-width="2"/><path d="M15 24h9" stroke="#ddd" stroke-width="2"/></svg></div>
      <div class="app"><svg class="app-ico" viewBox="0 0 32 32"><ellipse cx="16" cy="17" rx="14" ry="15" fill="#fff"/><path d="M8 16h7" stroke="#36c5f0" stroke-width="4" stroke-linecap="round"/><path d="M17 8v7" stroke="#2eb67d" stroke-width="4" stroke-linecap="round"/><path d="M17 19h7" stroke="#ecb22e" stroke-width="4" stroke-linecap="round"/><path d="M14 19v6" stroke="#e01e5a" stroke-width="4" stroke-linecap="round"/></svg><span class="slack-badge">10</span><i class="dot"></i></div>
      <div class="app"><svg class="app-ico cal-ico" viewBox="0 0 32 32"><rect x="6" y="1" width="22" height="27" rx="3" fill="#111" stroke="#eee" stroke-width="1.500"/><rect x="3" y="4" width="24" height="27" rx="3" fill="#fff" stroke="#111" stroke-width="1"/><rect x="3" y="4" width="24" height="6" fill="#111"/><text x="15" y="26" class="cal-num">31</text></svg></div>
      <div class="app"><svg class="app-ico" viewBox="0 0 32 32"><path d="M6 4l17-2 6 5v20l-18 2-6-6z" fill="#fff" stroke="#111"/><text x="17" y="24" class="notion-n">N</text></svg></div>
      <div class="app"><div class="via">V/A</div></div>
      <div class="app"><svg class="app-ico" viewBox="0 0 32 32"><path d="M23 1l8 4v22l-8 4-13-13-6 5-3-2v-10l3-2 6 5z" fill="#0d7fcb"/><path d="M23 9l-8 7 8 7z" fill="#1c1c1c"/></svg><i class="dot"></i></div>
      <div class="app"><svg class="app-ico" viewBox="0 0 32 32"><path d="M16 31L2 13 7 3h18l5 10z" fill="#0d5aa7"/><path d="M8 8l8 9 8-9v5l-8 9-8-9z" fill="#1c1c1c"/></svg></div>
      <div class="app"><svg class="app-ico" viewBox="0 0 32 32"><circle cx="16" cy="16" r="15" fill="#6e3fa3"/><circle cx="16" cy="15" r="9" fill="#1c1c1c"/><path d="M10 16c-1-6 2-6 3-5h6c1-1 4-1 3 5-1 4-12 4-12 0zM13 22v5h6v-5" fill="#fff"/></svg></div>
      <div class="app"><svg class="app-ico" viewBox="0 0 32 32"><rect x="2" y="0" width="28" height="32" rx="3" fill="#1464c8"/><path d="M2 29l11-15 8 10 4-4 5 6v3a3 3 0 0 1-3 3H5z" fill="#39c2ef"/><circle cx="24" cy="7" r="3" fill="#fff"/></svg><i class="dot"></i></div>
    </div>
    <div class="tray">
      <svg class="tray-up" viewBox="0 0 16 16"><path d="M2 11l6-6 6 6"/></svg>
      <div class="tray-lang"><span>POR</span><span>PTB</span></div>
      <svg class="tray-ico tray-wifi" viewBox="0 0 20 20"><path d="M1 7c5-5 13-5 18 0M4 10c3.500-3.500 8.500-3.500 12 0M7 13c2-2 4-2 6 0"/><circle cx="10" cy="16" r="1"/></svg>
      <svg class="tray-ico tray-sound" viewBox="0 0 20 20"><path d="M2 7h3l5-4v14l-5-4H2zM13 7c1.500 2 1.500 4 0 6M16 4c3 4 3 8 0 12"/></svg>
      <svg class="tray-ico tray-batt" viewBox="0 0 20 20"><rect x="1" y="4" width="16" height="12" rx="2"/><path d="M3 7v6M19 8v4"/></svg>
      <div class="tray-time"><span>21:31</span><span>18/08/2024</span></div>
      <svg class="tray-ico tray-bell" viewBox="0 0 20 20"><path d="M10 2c-4 0-5 3-5 6 0 4-2 6-2 6h14s-2-2-2-6c0-3-1-6-5-6zM8 17h4"/></svg>
      <svg class="tray-copilot" viewBox="0 0 32 32"><path d="M11 2h9c4 1 4 8 7 12l1 8H12L6 16z" fill="#37a4e8"/><path d="M18 6c6 0 8 6 8 14H14z" fill="#d14bb0"/><path d="M6 16l6-8 6 14-8 2z" fill="#56c15a"/><rect x="10" y="21" width="18" height="10" rx="1.500" fill="#f6c021"/><text x="19" y="29" class="pre-tag">PRE</text></svg>
    </div>
  </div>
</body>
</html>
```

FILE: styles.css
```css
* { box-sizing: border-box; }

html, body {
  margin: 0;
  height: 1079px;
  overflow: hidden;
}
body {
  font-family: "Noto Sans", "Open Sans", sans-serif;
  background: #0a0a0a;
  color: #ddd;
}
svg { display: block; fill: none; stroke: currentColor; stroke-width: 1.2; }
.defs { position: absolute; width: 0; height: 0; }
.thick { stroke-width: 2.2; }
.gl { fill: currentColor; stroke: none; text-anchor: middle; font-family: "Liberation Sans", sans-serif; font-weight: 700; }
.big-glyph { font-size: 20px; }
.mid-glyph { font-size: 15px; font-style: italic; }
.thin-glyph { font-weight: 400; font-style: normal; }
.small-glyph { font-size: 12px; }
.tiny-glyph { font-size: 8px; }
.badge-num { font-size: 9px; fill: #fff; }

.screen { display: flex; height: 1019px; }

/* left opera strip */
.sidebar {
  width: 51px;
  flex: none;
  background: #0a0a0a;
  color: #c9c9c9;
  border-right: 1px solid #a9a9a9;
  display: flex;
  flex-direction: column;
  align-items: center;
}
.side-logo { height: 52px; margin-bottom: 26px; display: flex; align-items: center; }
.side-item { height: 56px; display: flex; align-items: center; justify-content: center; flex: none; }
.side-item-tall { height: 58px; }
.side-ico { width: 22px; height: 22px; }
.side-logo .side-ico { height: 26px; width: 24px; }
.side-arrow { stroke: #aaa; stroke-width: 5; stroke-linecap: round; }
.bright { stroke: #eee; stroke-width: 2; }
.side-sep { height: 20px; width: 15px; flex: none; display: flex; align-items: center; }
.side-sep::after { content: ""; width: 100%; height: 1px; background: #888; }
.side-sep-wide { width: 50px; height: 18px; margin: -8px 0 7px; }
.side-sep-wide::after { background: #555; }
.gpt-badge { width: 25px; height: 25px; background: #1f9a7b; border-radius: 5px; display: flex; align-items: center; justify-content: center; }
.gpt-ico { width: 19px; height: 19px; color: #fff; }
.insta { width: 25px; height: 25px; border-radius: 50%; background: linear-gradient(35deg, #fcc02c 0%, #f0303c 45%, #c12bb1 75%, #6a30d8 100%); display: flex; align-items: center; justify-content: center; }
.insta-ico { width: 23px; height: 23px; color: #fff; stroke-width: 2; }
.x-badge { width: 25px; height: 25px; background: #000; border-radius: 5px; color: #fff; font-family: "DejaVu Sans", sans-serif; font-size: 17px; line-height: 25px; text-align: center; }
.discord { width: 23px; height: 23px; background: #eee; border-radius: 3px; }
.discord-ico { width: 23px; height: 23px; fill: #111; stroke: none; }
.side-more { margin-top: 26px; font-size: 11px; letter-spacing: 1px; color: #c9c9c9; line-height: 14px; }

.main { flex: 1; min-width: 0; display: flex; flex-direction: column; }

/* browser chrome */
.tabbar { height: 38px; display: flex; align-items: center; padding-left: 11px; background: #0a0a0a; flex: none; }
.tab-game { width: 20px; height: 20px; margin-right: 24px; color: #ccc; flex: none; }
.tab { width: 102.700px; height: 38px; flex: none; display: flex; align-items: center; gap: 3px; font-size: 14px; color: #c6c6c6; white-space: nowrap; }
.tab-ico { width: 20px; height: 20px; flex: none; }
.tab-title { width: 64px; overflow: hidden; -webkit-mask-image: linear-gradient(90deg, #000 80%, transparent); mask-image: linear-gradient(90deg, #000 80%, transparent); }
.tab-title-short { width: 40px; margin-left: 2px; -webkit-mask-image: none; mask-image: none; }
.tab-title-active { width: 34px; color: #eee; }
.tab-sound { width: 15px; height: 15px; margin-left: 3px; flex: none; }
.tab-active { width: 97px; background: #141414; border: 1px solid #d0d0d0; border-bottom: 0; border-radius: 4px 4px 0 0; padding-left: 3px; position: relative; z-index: 1; margin-bottom: -1px; height: 38px; }
.tab-close { width: 14px; height: 14px; margin-left: 7px; color: #ddd; flex: none; }
.tab-new { width: 15px; height: 15px; margin-left: 14px; color: #ccc; flex: none; }
.win-btns { margin-left: auto; display: flex; align-items: center; color: #ccc; padding-right: 14px; }
.win-search { width: 20px; height: 20px; margin-right: 30px; }
.win-btn { width: 20px; height: 20px; margin-left: 30px; }
.win-search + .win-btn { margin-left: 0; }

.addressbar { height: 49px; flex: none; background: #141414; border-top: 1px solid; border-image: linear-gradient(90deg, #c8c8c8 90%, #141414 94%) 1; display: flex; align-items: center; padding-left: 17px; color: #cfcfcf; }
.nav-ico { width: 16px; height: 20px; flex: none; }
.nav-fwd { margin-left: 24px; color: #555; }
.nav-reload { margin-left: 26px; }
.nav-dots { margin-left: 10px; width: 14px; color: #444; font-size: 14px; }
.nav-lock { width: 16px; height: 18px; margin-left: 2px; flex: none; }
.url { margin-left: 38px; font-size: 15.400px; color: #a9a9a9; white-space: nowrap; }
.url b { font-weight: 400; color: #f0f0f0; }
.addr-actions { margin-left: auto; display: flex; align-items: center; padding-right: 12px; gap: 12px; }
.addr-ico { width: 20px; height: 20px; flex: none; }
.addr-dots { width: 2px; color: #444; font-size: 13px; margin: 0 -7px 0 -3px; }
.addr-gap { margin-left: 9px; }

.bookmarks { height: 43px; flex: none; background: #141414; display: flex; align-items: center; padding: 0 0 4px 17px; font-size: 14px; color: #c2c2c2; position: relative; white-space: nowrap; }
.bm { display: flex; align-items: center; gap: 12px; margin-right: 17.800px; }
.bm-tight { margin-right: 15.500px; }
.bm-ico { width: 16px; height: 16px; color: #ccc; flex: none; }
.bm-fav { width: 20px; height: 20px; stroke: none; flex: none; margin-right: -4px; }
.bm-more { width: 14px; height: 14px; position: absolute; right: 27px; top: 13px; color: #bbb; }

/* SAP menu */
.menubar { height: 39px; flex: none; background: #2c4e6e; display: flex; align-items: center; padding-left: 22px; gap: 18.200px; font-size: 16px; color: #e4e9ee; position: relative; }
.menu-notch { position: absolute; left: 897px; top: 0; width: 58px; height: 20px; background: #5f7081; clip-path: polygon(0 0, 100% 0, 88% 100%, 12% 100%); color: #ccd; display: flex; justify-content: center; }
.notch-ico { width: 16px; height: 12px; stroke-width: 2; }
.menu-company { position: absolute; left: 934px; top: 6px; font-size: 15.800px; font-weight: 600; color: #fff; text-decoration: underline; white-space: nowrap; }
.menu-win { margin-left: auto; display: flex; gap: 10px; padding-right: 14px; color: #fff; }
.menu-win-ico { width: 15px; height: 15px; }

.toolbar { height: 58px; flex: none; background: #46637c; display: flex; align-items: center; padding: 8px 0 0 9px; color: #fff; }
.tool-group { display: flex; margin-right: 11.300px; }
.tool { width: 26px; height: 26px; margin: 0 5.150px; flex: none; overflow: visible; }
.off { color: #728a9f; }

/* SAP desktop */
.desktop {
  flex: 1;
  position: relative;
  background: linear-gradient(180deg, #2f5169 0%, #3c5874 30%, #5f7f9c 100%);
  border-top: 2px solid #93a3b3;
  border-left: 2px solid #b4c0cb;
  border-right: 3px solid #c9cfd5;
}
.desk-head { display: flex; align-items: center; padding: 37px 41px 0 50px; color: #fff; }
.burger { display: flex; flex-direction: column; gap: 5px; margin-right: auto; }
.burger span { display: block; width: 23px; height: 3px; background: #fff; }
.desk-ico { width: 24px; height: 24px; stroke-width: 1.8; }
.desk-open { margin-right: 52px; }
.desk-scroll { position: absolute; right: 5px; top: 93px; width: 9px; height: 628px; border-radius: 5px; background: #b5b5b5; }

.dialog {
  position: absolute;
  left: 566px;
  top: -2px;
  width: 728px;
  height: 741px;
  background: #fff;
  border-top: 2px solid #d79a08;
  border-bottom: 1px solid #2c4e6e;
  display: flex;
  flex-direction: column;
  overflow: hidden;
}
.dlg-title { height: 36px; flex: none; background: #2c4e6e; color: #e6ecf2; font-size: 13.800px; display: flex; align-items: center; padding: 0 16px 0 15px; }
.dlg-title span { margin-right: auto; }
.dlg-btns { display: flex; gap: 14px; color: #fff; margin-bottom: 2px; }
.dlg-btn { width: 13px; height: 13px; overflow: visible; }
.dlg-body { flex: 1; position: relative; border-bottom: 8px solid #fbf3f6; border-right: 7px solid #fbf5f7; overflow: hidden; }
.form { position: absolute; left: 15px; top: 0; width: 675px; height: 100%; padding-left: 13px; border-left: 1px solid #d5d9de; border-right: 1px solid #d5d9de; color: #222; font-size: 11.800px; overflow: hidden; }
.dlg-scroll { position: absolute; right: 8px; top: 57px; width: 11px; height: 466px; border-radius: 5px; background: #e2e2e2; }

.row { height: 19px; display: flex; align-items: center; white-space: nowrap; position: relative; }
.row-first { margin-top: -10px; }
.lbl { width: 293px; height: 100%; flex: none; line-height: 18px; border-bottom: 1px solid #e6eaee; }
.lbl-sub { width: 278px; }
.row-sub { padding-left: 15px; }
.field { width: 356px; height: 17px; flex: none; padding-left: 3px; line-height: 16px; background: #fff; border: 1px solid #d3d6da; border-bottom: 2px solid #c4c8cc; border-radius: 2px; position: relative; }
.field-key { background: #fdf3e0; }
.field-ro { background: #e6edf4; width: 332px; }
.combo::after { content: ""; position: absolute; right: 3px; top: 4px; border-left: 4px solid transparent; border-right: 4px solid transparent; border-top: 6px solid #222; }
.check-row { padding-left: 1px; gap: 7px; }
.check-sub { padding-left: 16px; }
.box { width: 14px; height: 13px; flex: none; background: #fff; border: 1px solid #b2b7bc; border-bottom: 2px solid #a5aab0; position: relative; }
.checked::after { content: ""; position: absolute; left: 3px; top: 0; width: 5px; height: 9px; border-right: 2px solid #111; border-bottom: 2px solid #111; transform: rotate(40deg); }
.dim { color: #9a9a9a; }
.dim .box { background: #ececec; }
.dim .checked::after { border-color: #999; }
.radio { width: 14px; height: 14px; flex: none; border-radius: 50%; border: 1px solid #9aa0a6; background: #f4f4f4; position: relative; margin: 0 1px; }
.radio-on::after { content: ""; position: absolute; left: 4px; top: 4px; width: 4px; height: 4px; border-radius: 50%; background: #222; }
.mark { position: absolute; left: 7px; top: -4px; width: 258px; height: 28px; border: 2px solid #ea0a1e; border-radius: 6px; }
.section { color: #222; }
.bank-frame { margin-left: -5px; width: 634px; height: 86px; padding: 4px 0 0 5px; border: 1px solid #dfe3e7; }
.row-bank { height: 20px; }
.row-bank .field { width: 332px; height: 18px; }
.link-btn { width: 19px; height: 19px; stroke: none; position: absolute; left: 630px; top: -1px; }
.mt-1 { margin-top: 1px; }
.mt-18 { margin-top: 18px; }
.mt-20 { margin-top: 20px; }
.mt-22 { margin-top: 22px; }
.mt-24 { margin-top: 24px; }
.mt-41 { margin-top: 41px; }
.mt-42 { margin-top: 42px; }
.mt-55 { margin-top: 55px; }

/* status row */
.statusbar { height: 49px; flex: none; background: #fff; display: grid; grid-template-columns: 872px 95px 365px 360px; grid-auto-rows: 16px; gap: 6px 7px; padding: 7px 0 0 6px; position: relative; color: #222; font-size: 11.500px; }
.st-field { background: #e6edf4; border: 1px solid #cfd3d7; border-bottom: 2px solid #c4c8cc; border-radius: 2px; }
.st-text { text-align: center; line-height: 16px; margin-left: -3px; }
.sap-logo { position: absolute; left: 1747px; top: 10px; display: flex; align-items: center; gap: 2px; }
.sap-mark { font-family: "Liberation Sans", sans-serif; font-size: 27px; font-weight: 700; font-style: italic; letter-spacing: -2px; color: #b4b4b4; line-height: 26px; }
.sap-name { display: flex; flex-direction: column; line-height: 11px; }
.sap-biz { font-size: 9.500px; color: #b5b5b5; margin-bottom: 3px; }
.sap-one { font-size: 16px; font-weight: 600; color: #f0ab00; line-height: 16px; }
.grip { position: absolute; right: 2px; bottom: 2px; width: 14px; height: 14px; stroke: none; }
.st-tip { position: absolute; left: 3px; top: 16px; width: 191px; height: 34px; display: flex; align-items: center; gap: 9px; padding-left: 4px; font-size: 12.800px; color: #222; background: linear-gradient(180deg, #b8b8b8, #e9e9e9 50%, #fff); border: 2px solid #aeaeae; white-space: nowrap; }
.tip-ico { width: 24px; height: 28px; stroke: none; flex: none; }

/* windows taskbar */
.taskbar { height: 60px; background: #1c1c1c; display: flex; align-items: center; padding-left: 576px; color: #eee; border-top: 1px solid #111; }
.task-apps { display: flex; }
.app { width: 55px; height: 60px; display: flex; align-items: center; justify-content: center; position: relative; }
.app-ico { width: 30px; height: 30px; stroke: none; }
.app-active { background: #2a2a2a; border-radius: 5px; height: 50px; width: 49px; margin: 0 3px; }
.pill { position: absolute; left: 14px; bottom: 0; width: 20px; height: 4px; border-radius: 2px; background: #6ad1d9; }
.dot { position: absolute; left: 25px; bottom: 3px; width: 5px; height: 5px; border-radius: 50%; background: #999; }
.slack-badge { position: absolute; left: 30px; top: 6px; width: 18px; height: 18px; border-radius: 50%; background: #d81b4a; color: #fff; font-size: 11px; line-height: 18px; text-align: center; }
.cal-num { font-family: "Liberation Serif", serif; font-size: 15px; font-weight: 700; fill: #111; text-anchor: middle; }
.notion-n { font-family: "Liberation Serif", serif; font-size: 18px; font-weight: 700; fill: #111; stroke: none; text-anchor: middle; }
.via { width: 30px; height: 30px; border-radius: 4px; background: #fff; color: #555; font-size: 13px; font-weight: 700; line-height: 30px; text-align: center; letter-spacing: -1px; }
.pre-tag { font-family: "Liberation Sans", sans-serif; font-size: 7px; font-weight: 700; fill: #222; stroke: none; text-anchor: middle; }
.tray { margin-left: auto; display: flex; align-items: center; padding-right: 23px; font-size: 14px; line-height: 20px; }
.tray-up { width: 14px; height: 14px; stroke-width: 1.8; margin-right: 27px; }
.tray-lang { display: flex; flex-direction: column; align-items: center; margin-right: 21px; }
.tray-ico { width: 20px; height: 20px; }
.tray-wifi { margin-right: 8px; }
.tray-sound { margin-right: 12px; }
.tray-batt { margin-right: 14px; }
.tray-time { display: flex; flex-direction: column; align-items: flex-end; margin: 0 0 0 10px; }
.tray-bell { margin: 0 0 0 10px; }
.tray-copilot { width: 30px; height: 32px; stroke: none; margin-left: 20px; }
```
